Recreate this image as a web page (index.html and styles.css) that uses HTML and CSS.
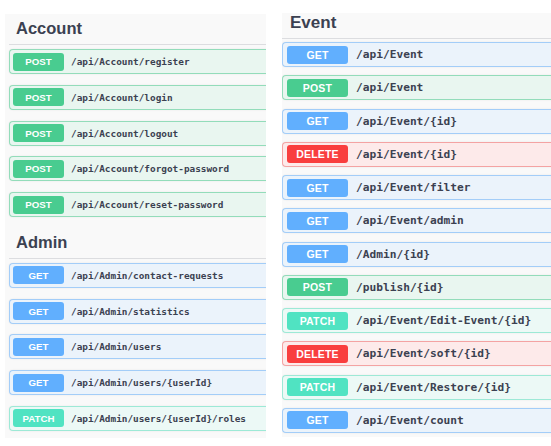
FILE: index.html
```html
<!DOCTYPE html>
<html>
<head>
<meta charset="utf-8">
<link rel="stylesheet" href="styles.css">
</head>
<body>
<div class="page">
  <div class="panel left">
    <h4 class="tag">Account</h4>
    <div class="op post"><span class="m">POST</span><span class="p">/api/Account/register</span></div>
    <div class="op post"><span class="m">POST</span><span class="p">/api/Account/login</span></div>
    <div class="op post"><span class="m">POST</span><span class="p">/api/Account/logout</span></div>
    <div class="op post"><span class="m">POST</span><span class="p">/api/Account/forgot-password</span></div>
    <div class="op post"><span class="m">POST</span><span class="p">/api/Account/reset-password</span></div>
    <h4 class="tag">Admin</h4>
    <div class="op get"><span class="m">GET</span><span class="p">/api/Admin/contact-requests</span></div>
    <div class="op get"><span class="m">GET</span><span class="p">/api/Admin/statistics</span></div>
    <div class="op get"><span class="m">GET</span><span class="p">/api/Admin/users</span></div>
    <div class="op get"><span class="m">GET</span><span class="p">/api/Admin/users/{userId}</span></div>
    <div class="op patch"><span class="m">PATCH</span><span class="p">/api/Admin/users/{userId}/roles</span></div>
  </div>
  <div class="panel right">
    <h4 class="tag">Event</h4>
    <div class="op get"><span class="m">GET</span><span class="p">/api/Event</span></div>
    <div class="op post"><span class="m">POST</span><span class="p">/api/Event</span></div>
    <div class="op get"><span class="m">GET</span><span class="p">/api/Event/{id}</span></div>
    <div class="op delete"><span class="m">DELETE</span><span class="p">/api/Event/{id}</span></div>
    <div class="op get"><span class="m">GET</span><span class="p">/api/Event/filter</span></div>
    <div class="op get"><span class="m">GET</span><span class="p">/api/Event/admin</span></div>
    <div class="op get"><span class="m">GET</span><span class="p">/Admin/{id}</span></div>
    <div class="op post"><span class="m">POST</span><span class="p">/publish/{id}</span></div>
    <div class="op patch"><span class="m">PATCH</span><span class="p">/api/Event/Edit-Event/{id}</span></div>
    <div class="op delete"><span class="m">DELETE</span><span class="p">/api/Event/soft/{id}</span></div>
    <div class="op patch"><span class="m">PATCH</span><span class="p">/api/Event/Restore/{id}</span></div>
    <div class="op get"><span class="m">GET</span><span class="p">/api/Event/count</span></div>
  </div>
</div>
</body>
</html>
```

FILE: styles.css
```css
* { box-sizing: border-box; }
html, body { margin: 0; padding: 0; background: #ffffff; }
body { width: 551px; height: 446px; overflow: hidden; font-family: "Liberation Sans", Arial, sans-serif; color: #3b4151; }
.page { display: flex; align-items: flex-start; padding-left: 5px; }
.panel { background: #f9f9f9; overflow: hidden; }
.left { width: 261px; margin-top: 14px; padding: 0 0 7px 4px; }
.right { width: 269px; margin-left: 16px; margin-top: 13px; padding: 0 0 4px 0; }
.tag { margin: 0; font-weight: 700; color: #3b4151; line-height: 20px; border-bottom: 1px solid #dcdde0; }
.left .tag { font-size: 16.5px; padding: 4px 0 6px 7px; margin-bottom: 4px; }
.right .tag { font-size: 17px; padding: 0 0 5px 8px; margin-bottom: 3px; }
.op { display: flex; align-items: center; height: 25px; border: 1px solid; border-right: none; border-radius: 4px 0 0 4px; margin-right: -6px; box-shadow: 0 0 2px rgba(0,0,0,.08); }
.left .op { margin-bottom: 10.75px; padding-left: 3px; }
.right .op { margin-bottom: 8.27px; padding-left: 4px; }
.left .op:last-child, .right .op:last-child { margin-bottom: 0; }
.m { display: flex; align-items: center; justify-content: center; height: 18px; border-radius: 3px; color: #ffffff; font-weight: 700; flex: none; }
.left .m { width: 51px; font-size: 9.7px; margin-right: 7px; }
.right .m { width: 61px; font-size: 10.5px; margin-right: 8px; letter-spacing: 0.2px; }
.p { font-family: "DejaVu Sans Mono", "Liberation Mono", monospace; font-weight: 700; color: #3b4151; white-space: nowrap; }
.left .p { font-size: 9.4px; }
.right .p { font-size: 11.2px; }
.post { background: #e9f6f0; border-color: #93dcba; }
.post .m { background: #49cc90; }
.get { background: #ebf3fb; border-color: #a3cdf8; }
.get .m { background: #61affe; }
.delete { background: #fdeaea; border-color: #f4a3a3; }
.delete .m { background: #f93e3e; }
.patch { background: #ecf9f6; border-color: #9de9d6; }
.patch .m { background: #50e3c2; }
```
